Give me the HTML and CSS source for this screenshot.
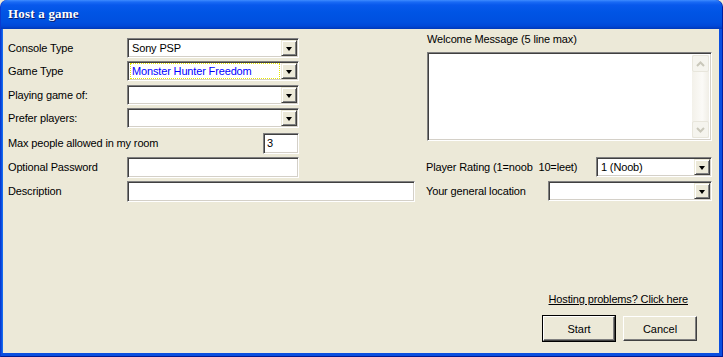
FILE: index.html
```html
<!DOCTYPE html>
<html>
<head>
  <meta charset="UTF-8" />
  <title>Host a game</title>
  <link rel="stylesheet" href="styles.css">
</head>
<body>
  <div class="window">
    <!-- Title bar -->
    <div class="titlebar"><span>Host a game</span></div>

    <div class="client">
      <div class="form">
        <!-- Left side -->
        <div class="col-left">
          <div class="row">
            <label>Console Type</label>
            <div class="combo"><div class="combo-text">Sony PSP</div><div class="drop"><i></i></div></div>
          </div>
          <div class="row">
            <label>Game Type</label>
            <div class="combo"><div class="combo-text focused">Monster Hunter Freedom</div><div class="drop"><i></i></div></div>
          </div>
          <div class="row">
            <label>Playing game of:</label>
            <div class="combo"><div class="combo-text"></div><div class="drop"><i></i></div></div>
          </div>
          <div class="row">
            <label>Prefer players:</label>
            <div class="combo"><div class="combo-text"></div><div class="drop"><i></i></div></div>
          </div>
          <div class="row">
            <label class="wide">Max people allowed in my room</label>
            <div class="edit small">3</div>
          </div>
          <div class="row">
            <label>Optional Password</label>
            <div class="edit"></div>
          </div>
          <div class="row">
            <label>Description</label>
            <div class="edit long"></div>
          </div>
        </div>

        <!-- Right side -->
        <div class="col-right">
          <div class="memo-label">Welcome Message (5 line max)</div>
          <div class="memo">
            <div class="vscroll">
              <div class="sbtn up"><svg width="9" height="6" viewBox="0 0 9 6"><path d="M1 5 L4.5 1.5 L8 5" fill="none" stroke="#c9c7ba" stroke-width="2"/></svg></div>
              <div class="track"></div>
              <div class="sbtn down"><svg width="9" height="6" viewBox="0 0 9 6"><path d="M1 1 L4.5 4.5 L8 1" fill="none" stroke="#c9c7ba" stroke-width="2"/></svg></div>
            </div>
          </div>
          <div class="row right-row">
            <label>Player Rating (1=noob&nbsp;&nbsp;10=leet)</label>
            <div class="combo rating"><div class="combo-text">1 (Noob)</div><div class="drop"><i></i></div></div>
          </div>
          <div class="row right-row">
            <label>Your general location</label>
            <div class="combo location"><div class="combo-text"></div><div class="drop"><i></i></div></div>
          </div>
        </div>
      </div>

      <!-- Footer -->
      <div class="footer">
        <a class="help-link" href="#">Hosting problems? Click here</a>
        <div class="buttons">
          <button class="btn default">Start</button>
          <button class="btn">Cancel</button>
        </div>
      </div>
    </div>
  </div>
</body>
</html>
```

FILE: styles.css
```css
body {
  margin: 0;
  background: #ece9d8;
  font-family: "Liberation Sans", Arial, sans-serif;
  font-size: 11px;
  letter-spacing: -0.15px;
  color: #000;
}
.window {
  width: 723px;
  height: 357px;
  box-sizing: border-box;
  display: flex;
  flex-direction: column;
  background: #0a4fe0;
  border-radius: 7px 7px 0 0;
  border-left: 1px solid #0a3ad0;
  border-right: 1px solid #001ea0;
  border-bottom: 1px solid #001a90;
}
.titlebar {
  height: 29px;
  flex: none;
  border-radius: 7px 7px 0 0;
  background: linear-gradient(to bottom, #3f8cff 0, #1a6bf5 2px, #0858ec 5px, #0055e5 12px, #0050e0 22px, #0048d8 26px, #0038b8 29px);
  display: flex;
  align-items: center;
  padding-left: 7px;
  padding-bottom: 1px;
  box-sizing: border-box;
}
.titlebar span {
  font-family: "Liberation Serif", "Times New Roman", serif;
  font-weight: bold;
  font-size: 13px;
  color: #fff;
  text-shadow: 1px 1px 0 #0a1e6e;
  letter-spacing: 0.2px;
}
.client {
  flex: 1;
  margin: 0 3px 3px 2px;
  background: #ece9d8;
  display: flex;
  flex-direction: column;
  box-shadow: -1px 0 0 #166aee;
}
.form {
  display: flex;
}
.col-left {
  width: 413px;
  padding: 9px 0 0 5px;
  box-sizing: border-box;
  display: grid;
  grid-template-rows: 23px 24px 23px 25px 24px 24px 20px;
}
.row {
  display: flex;
  align-items: center;
  height: 20px;
}
.row label {
  width: 119px;
  flex: none;
  white-space: nowrap;
}
.row label.wide {
  width: 255px;
}
.combo {
  width: 172px;
  height: 20px;
  box-sizing: border-box;
  display: flex;
  background: #fff;
  border: 1px solid;
  border-color: #808080 #fff #fff #808080;
  box-shadow: inset 1px 1px 0 #404040, inset -1px -1px 0 #d4d0c8;
  padding: 1px;
}
.combo-text {
  flex: 1;
  padding-left: 3px;
  line-height: 16px;
  white-space: nowrap;
  overflow: hidden;
}
.combo-text.focused {
  color: #0000ff;
  outline: 1px dotted #e8e800;
  outline-offset: -1px;
  padding-left: 2px;
  margin: 0 1px 0 1px;
}
.drop {
  width: 16px;
  height: 16px;
  box-sizing: border-box;
  background: #ece9d8;
  border: 1px solid;
  border-color: #ece9d8 #404040 #404040 #ece9d8;
  box-shadow: inset 1px 1px 0 #fff, inset -1px -1px 0 #808080;
  display: flex;
  align-items: center;
  justify-content: center;
}
.drop i {
  width: 0;
  height: 0;
  border-left: 3.5px solid transparent;
  border-right: 3.5px solid transparent;
  border-top: 4px solid #000;
  margin-top: 1px;
}
.edit {
  width: 172px;
  height: 21px;
  box-sizing: border-box;
  background: #fff;
  border: 1px solid;
  border-color: #808080 #fff #fff #808080;
  box-shadow: inset 1px 1px 0 #404040, inset -1px -1px 0 #d4d0c8;
  padding: 0 3px;
  line-height: 19px;
}
.edit.small {
  width: 36px;
  margin-top: 1px;
}
.edit.long {
  width: 288px;
}
.col-right {
  width: 286px;
  margin-left: 10px;
  padding-top: 3px;
}
.memo-label {
  line-height: 14px;
  margin-left: 1px;
}
.memo {
  margin: 6px 0 0 1px;
  width: 285px;
  height: 89px;
  box-sizing: border-box;
  background: #fff;
  border: 1px solid;
  border-color: #808080 #fff #fff #808080;
  box-shadow: inset 1px 1px 0 #404040, inset -1px -1px 0 #d4d0c8;
  padding: 2px 2px 2px 0;
  display: flex;
  justify-content: flex-end;
}
.vscroll {
  width: 17px;
  display: flex;
  flex-direction: column;
  background: linear-gradient(to right, #f3f1ea, #fbfaf7 60%, #f0eee6);
}
.track {
  flex: 1;
}
.sbtn {
  height: 17px;
  box-sizing: border-box;
  border: 1px solid #e8e6dc;
  border-radius: 2px;
  background: #f5f4ee;
  display: flex;
  align-items: center;
  justify-content: center;
}
.right-row {
  justify-content: space-between;
  margin-top: 16px;
}
.right-row + .right-row {
  margin-top: 4px;
}
.right-row label {
  width: auto;
}
.combo.rating {
  width: 116px;
}
.combo.location {
  width: 164px;
}
.footer {
  margin-top: auto;
  display: flex;
  flex-direction: column;
  align-items: flex-end;
  padding: 0 22px 12px 0;
}
.help-link {
  color: #000;
  text-decoration: underline;
  margin-right: 9px;
  margin-bottom: 10px;
  line-height: 14px;
}
.buttons {
  display: flex;
  gap: 8px;
}
.btn {
  width: 74px;
  height: 25px;
  font-family: "Liberation Sans", Arial, sans-serif;
  font-size: 11px;
  background: #ece9d8;
  border: 1px solid;
  border-color: #fff #404040 #404040 #fff;
  box-shadow: inset -1px -1px 0 #808080;
  padding: 0;
}
.btn.default {
  width: 72px;
  outline: 1px solid #000;
  outline-offset: 0;
  border-color: #fff #404040 #404040 #fff;
}
```
